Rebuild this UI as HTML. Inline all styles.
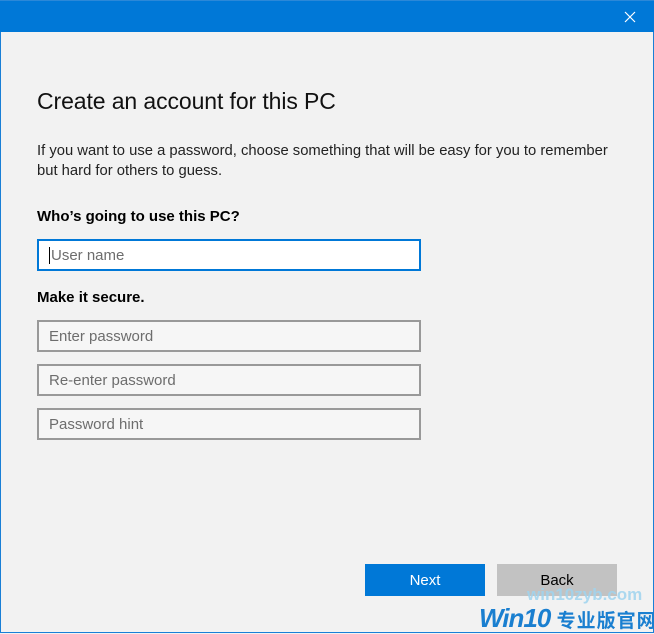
<!DOCTYPE html>
<html><head><style>
*{margin:0;padding:0;box-sizing:border-box}
body{width:654px;height:633px;background:#f2f2f2;font-family:"Liberation Sans",sans-serif;position:relative;overflow:hidden;border:1px solid #1a7fd6;border-top:none}
.bar{position:absolute;left:-1px;top:0;width:654px;height:32px;background:#0078d7;border-top:1px solid #2b88d8}
.x{position:absolute;left:622px;top:8px;width:16px;height:16px}
.t{position:absolute;left:36px;white-space:nowrap;color:#000}
.in{position:absolute;left:36px;width:384px;height:32px;border:2px solid #999;background:#f6f6f6;color:#6d6d6d;font-size:15px;padding:6px 0 0 10px}
.btn{position:absolute;top:564px;width:120px;height:32px;font-size:15px;text-align:center;line-height:33px}
</style></head><body>
<div class="bar"><svg class="x" viewBox="0 0 16 16"><path d="M3 3L13 13M13 3L3 13" stroke="#fff" stroke-width="1.2"/></svg></div>
<div class="t" style="top:88px;font-size:23px;color:#111;letter-spacing:-0.1px">Create an account for this PC</div>
<div class="t" style="top:141px;font-size:14.8px;line-height:20px;color:#222">If you want to use a password, choose something that will be easy for you to remember<br>but hard for others to guess.</div>
<div class="t" style="top:208px;font-size:15px;font-weight:bold">Who’s going to use this PC?</div>
<div class="in" style="top:239px;border-color:#0078d7;background:#fff"><span style="border-left:1px solid #000;padding-left:1px">User name</span></div>
<div class="t" style="top:289px;font-size:15px;font-weight:bold">Make it secure.</div>
<div class="in" style="top:320px">Enter password</div>
<div class="in" style="top:364px">Re-enter password</div>
<div class="in" style="top:408px">Password hint</div>
<div class="btn" style="left:364px;background:#0078d7;color:#fff">Next</div>
<div class="btn" style="left:496px;background:#c2c2c2;color:#000">Back</div>
<div class="t" style="left:526px;top:585px;font-size:17px;font-weight:bold;color:#9fd4ef;opacity:.85">win10zyb.com</div>
<div class="t" style="left:478px;top:603px;font-size:26px;font-weight:bold;font-style:italic;color:#1a7fd0;font-family:'Liberation Sans','Noto Sans CJK SC',sans-serif;letter-spacing:-1px">Win10<span style="font-style:normal;font-size:19px;letter-spacing:1px"> 专业版官网</span></div>
</body></html>
